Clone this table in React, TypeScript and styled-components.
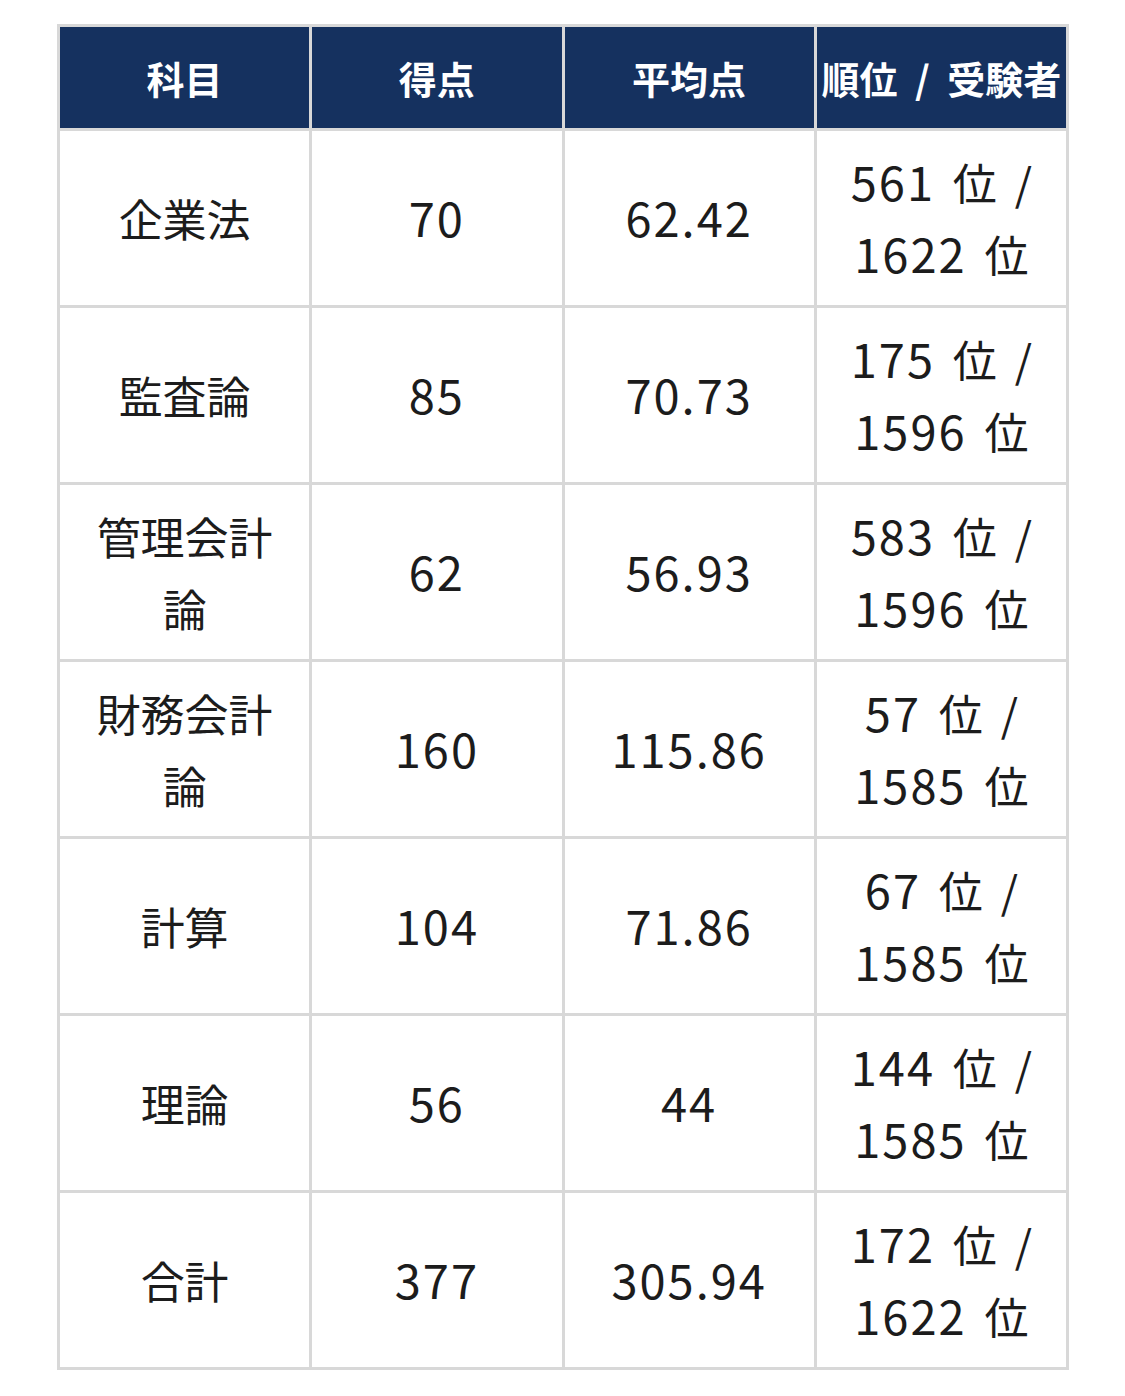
import React from "react";
import styled, { createGlobalStyle } from "styled-components";

const GlobalStyle = createGlobalStyle`
  html, body {
    margin: 0;
    padding: 0;
    background: #ffffff;
  }
  body {
    font-family: "Noto Sans CJK JP", "Noto Sans", sans-serif;
    color: #1c1c1c;
  }
`;

const Page = styled.div`
  padding: 24px 0 0 57px;
`;

const ScoreTable = styled.table`
  width: 1012px;
  table-layout: fixed;
  border-collapse: collapse;
  border: 3px solid #d8d8d8;
`;

const HeadCell = styled.th`
  height: 101px;
  padding: 0;
  background: #15315f;
  color: #ffffff;
  font-size: 38px;
  font-weight: 700;
  text-align: center;
  white-space: nowrap;
  word-spacing: 9px;
  border: 3px solid #d8d8d8;
  border-bottom: none;
`;

const Row = styled.tr`
  height: 177px;
`;

const Cell = styled.td`
  padding: 0 26px;
  font-size: 44px;
  line-height: 72px;
  font-weight: 400;
  text-align: center;
  vertical-align: middle;
  word-spacing: 8px;
  border: 3px solid #d8d8d8;
`;

const Num = styled.span`
  font-size: 47px;
  line-height: 1;
  letter-spacing: 2px;
`;

type Result = {
  subject: string;
  score: string;
  average: string;
  rank: string;
  total: string;
};

const results: Result[] = [
  { subject: "企業法", score: "70", average: "62.42", rank: "561", total: "1622" },
  { subject: "監査論", score: "85", average: "70.73", rank: "175", total: "1596" },
  { subject: "管理会計論", score: "62", average: "56.93", rank: "583", total: "1596" },
  { subject: "財務会計論", score: "160", average: "115.86", rank: "57", total: "1585" },
  { subject: "計算", score: "104", average: "71.86", rank: "67", total: "1585" },
  { subject: "理論", score: "56", average: "44", rank: "144", total: "1585" },
  { subject: "合計", score: "377", average: "305.94", rank: "172", total: "1622" },
];

const App = () => (
  <Page>
    <GlobalStyle />
    <ScoreTable>
      <thead>
        <tr>
          <HeadCell>科目</HeadCell>
          <HeadCell>得点</HeadCell>
          <HeadCell>平均点</HeadCell>
          <HeadCell>順位 / 受験者</HeadCell>
        </tr>
      </thead>
      <tbody>
        {results.map((r) => (
          <Row key={r.subject}>
            <Cell>{r.subject}</Cell>
            <Cell>
              <Num>{r.score}</Num>
            </Cell>
            <Cell>
              <Num>{r.average}</Num>
            </Cell>
            <Cell>
              <Num>{r.rank}</Num> 位 / <Num>{r.total}</Num> 位
            </Cell>
          </Row>
        ))}
      </tbody>
    </ScoreTable>
  </Page>
);

export default App;
